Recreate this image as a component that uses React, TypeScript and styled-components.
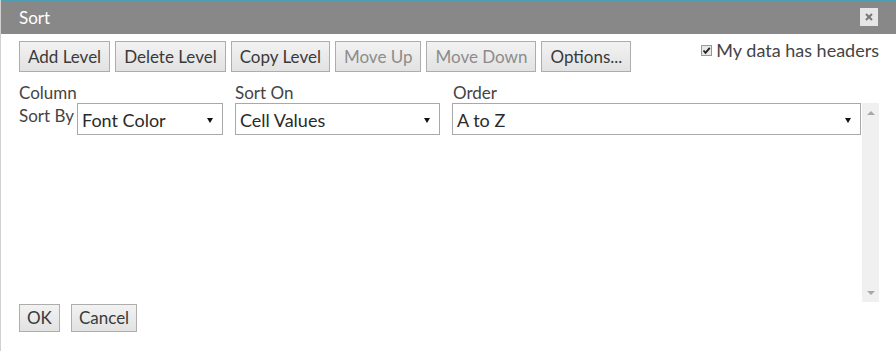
import React from "react";
import styled, { createGlobalStyle } from "styled-components";

const Global = createGlobalStyle`
  html, body { margin: 0; padding: 0; background: #fff; }
  body { font-family: Lato, "Open Sans", sans-serif; color: #333; }
`;

const Dialog = styled.div`
  width: 896px;
  height: 351px;
  box-sizing: border-box;
  border-left: 1px solid #d0d0d0;
  display: flex;
  flex-direction: column;
  overflow: hidden;
`;

const TitleBar = styled.div`
  height: 34px;
  box-sizing: border-box;
  margin-left: -1px;
  background: #888888;
  border: 1px solid #4f9fb3;
  display: flex;
  align-items: center;
  justify-content: space-between;
  padding: 0 17px 0 18px;
`;

const Title = styled.span`
  color: #fff;
  font-size: 17px;
`;

const CloseBtn = styled.div`
  width: 18px;
  height: 18px;
  background: #e6e6e6;
  display: flex;
  align-items: center;
  justify-content: center;
`;

const Body = styled.div`
  flex: 1;
  display: flex;
  flex-direction: column;
  padding: 7px 17px 0 18px;
`;

const Toolbar = styled.div`
  display: flex;
  align-items: flex-start;
  gap: 5px;
  height: 31px;
`;

const Button = styled.button<{ $disabled?: boolean }>`
  font-family: inherit;
  font-size: 17px;
  height: 31px;
  padding: 0 8px;
  border: 1px solid #adadad;
  border-radius: 0;
  background: linear-gradient(#f2f2f2, #e2e2e2);
  color: ${(p) => (p.$disabled ? "#8c8c8c" : "#3a3a3a")};
  line-height: 29px;
  white-space: nowrap;
`;

const HeaderCheck = styled.label`
  margin-left: auto;
  display: flex;
  align-items: center;
  gap: 4px;
  font-size: 18px;
  color: #444;
  margin-top: -2px;
`;

const CheckBox = styled.span`
  width: 11px;
  height: 11px;
  box-sizing: border-box;
  border: 1px solid #999;
  background: #e8e8e8;
  display: flex;
  align-items: center;
  justify-content: center;
`;

const ColHeader = styled.div`
  display: grid;
  grid-template-columns: 216px 218px 1fr;
  font-size: 17px;
  color: #444;
  margin-top: 11px;
  height: 20px;
  line-height: 20px;
`;

const ListArea = styled.div`
  display: flex;
  height: 199px;
`;

const Rows = styled.div`
  flex: 1;
`;

const LevelRow = styled.div`
  display: flex;
  align-items: flex-start;
`;

const SortByLabel = styled.span`
  font-size: 17px;
  color: #444;
  width: 58px;
  line-height: 20px;
  margin-top: 3px;
`;

const Select = styled.div<{ $w: number; $gap?: number }>`
  width: ${(p) => p.$w}px;
  margin-left: ${(p) => p.$gap ?? 0}px;
  height: 32px;
  box-sizing: border-box;
  border: 1px solid #a9a9a9;
  display: flex;
  align-items: center;
  justify-content: space-between;
  padding: 2px 9px 0 4px;
  font-size: 18px;
  color: #2a2a2a;
`;

const Arrow = styled.span`
  width: 0;
  height: 0;
  border-left: 3px solid transparent;
  border-right: 3px solid transparent;
  border-top: 5px solid #111;
`;

const Scrollbar = styled.div`
  width: 17px;
  background: #f0f0f0;
  display: flex;
  flex-direction: column;
  justify-content: space-between;
  align-items: center;
  padding: 8px 0 7px;
  box-sizing: border-box;
`;

const ScrollArrow = styled.span<{ $up?: boolean }>`
  width: 0;
  height: 0;
  border-left: 4px solid transparent;
  border-right: 4px solid transparent;
  ${(p) => (p.$up ? "border-bottom: 4px solid #a8a8a8;" : "border-top: 4px solid #a8a8a8;")}
`;

const Footer = styled.div`
  display: flex;
  gap: 11px;
  margin-top: 2px;
`;

const SmallButton = styled(Button)`
  height: 28px;
  line-height: 26px;
  padding: 0 7px;
`;

export default function App() {
  return (
    <>
      <Global />
      <Dialog>
        <TitleBar>
          <Title>Sort</Title>
          <CloseBtn>
            <svg width="10" height="10" viewBox="0 0 10 10">
              <path d="M2 2 L8 8 M8 2 L2 8" stroke="#777" strokeWidth="2" />
            </svg>
          </CloseBtn>
        </TitleBar>
        <Body>
          <Toolbar>
            <Button>Add Level</Button>
            <Button>Delete Level</Button>
            <Button>Copy Level</Button>
            <Button $disabled>Move Up</Button>
            <Button $disabled>Move Down</Button>
            <Button>Options...</Button>
            <HeaderCheck>
              <CheckBox>
                <svg width="9" height="9" viewBox="0 0 9 9">
                  <path d="M1.5 4.5 L3.5 6.8 L7.8 1.8" stroke="#222" strokeWidth="1.8" fill="none" />
                </svg>
              </CheckBox>
              My data has headers
            </HeaderCheck>
          </Toolbar>
          <ColHeader>
            <span>Column</span>
            <span>Sort On</span>
            <span>Order</span>
          </ColHeader>
          <ListArea>
            <Rows>
              <LevelRow>
                <SortByLabel>Sort By</SortByLabel>
                <Select $w={146}>
                  Font Color <Arrow />
                </Select>
                <Select $w={205} $gap={12}>
                  Cell Values <Arrow />
                </Select>
                <Select $w={409} $gap={12}>
                  A to Z <Arrow />
                </Select>
              </LevelRow>
            </Rows>
            <Scrollbar>
              <ScrollArrow $up />
              <ScrollArrow />
            </Scrollbar>
          </ListArea>
          <Footer>
            <SmallButton>OK</SmallButton>
            <SmallButton>Cancel</SmallButton>
          </Footer>
        </Body>
      </Dialog>
    </>
  );
}
